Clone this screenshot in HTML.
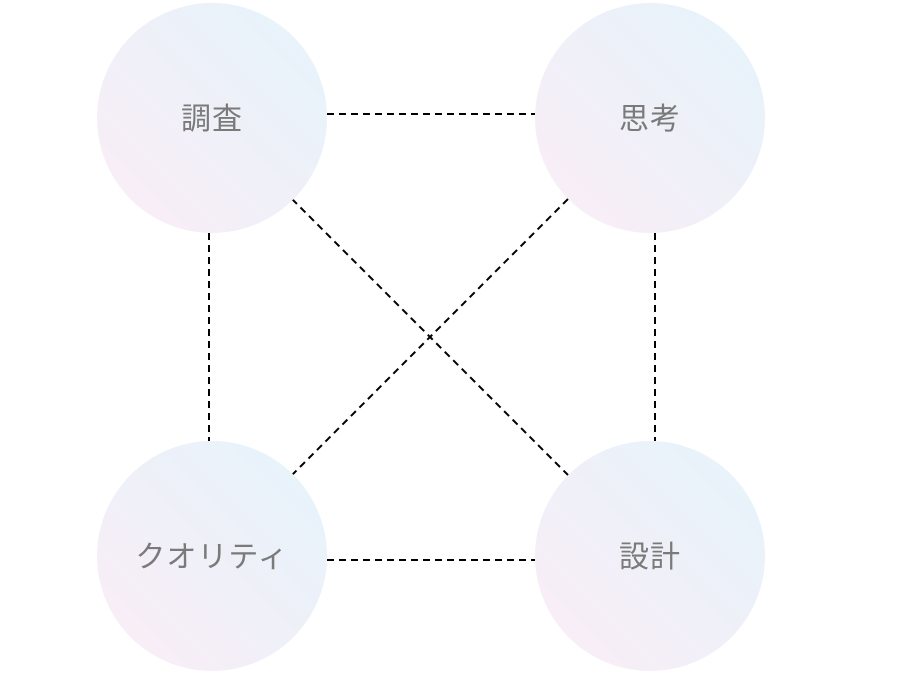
<!DOCTYPE html><html><head><meta charset="utf-8"><style>
body{margin:0;width:920px;height:674px;background:#fff;position:relative;overflow:hidden;font-family:"Liberation Sans","Noto Sans CJK JP",sans-serif}
.c{position:absolute;width:230px;height:230px;box-sizing:border-box;padding-bottom:5px;border-radius:50%;background:linear-gradient(45deg,#fcedf6 0%,#eff0f8 50%,#e5f4fb 100%);display:flex;align-items:center;justify-content:center;color:#7a7a7a;font-size:30px;letter-spacing:1px}
svg{position:absolute;left:0;top:0}
</style></head><body>
<svg width="920" height="674"><g stroke="#000" stroke-width="2" stroke-dasharray="7,5" fill="none">
<line x1="327" y1="114" x2="535" y2="114"/><line x1="327" y1="560" x2="535" y2="560"/>
<line x1="209" y1="233" x2="209" y2="441"/><line x1="655" y1="233" x2="655" y2="441"/>
<line x1="292" y1="199" x2="568" y2="475"/><line x1="568" y1="199" x2="292" y2="475"/>
</g></svg>
<div class="c" style="left:97px;top:3px">調査</div>
<div class="c" style="left:535px;top:3px">思考</div>
<div class="c" style="left:97px;top:441px">クオリティ</div>
<div class="c" style="left:535px;top:441px">設計</div>
</body></html>
